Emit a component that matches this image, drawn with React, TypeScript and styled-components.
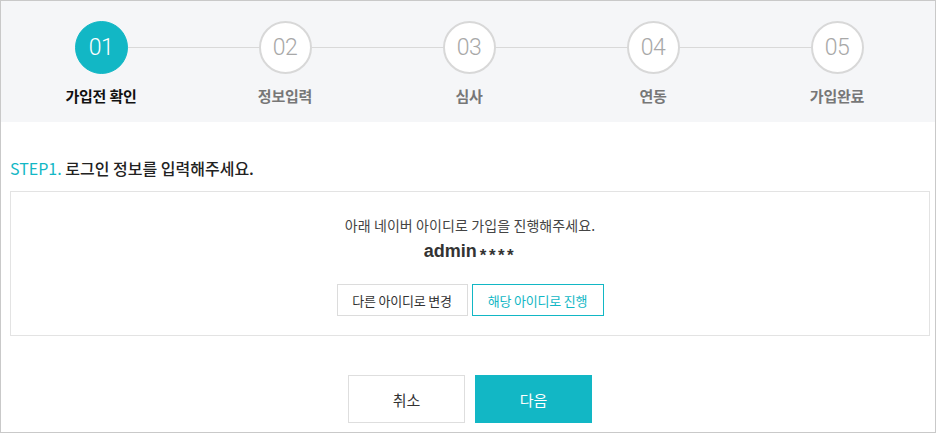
import styled, { createGlobalStyle } from "styled-components";

const Teal = "#12b7c5";

const steps = [
  { no: "01", label: "가입전 확인" },
  { no: "02", label: "정보입력" },
  { no: "03", label: "심사" },
  { no: "04", label: "연동" },
  { no: "05", label: "가입완료" },
];

const App: React.FC = () => {
  const current = 0;
  return (
    <>
      <GlobalStyle />
      <Frame>
        <StepsBand>
          {steps.map((step, i) => (
            <Step key={step.no} first={i === 0}>
              <Circle active={i === current}>{step.no}</Circle>
              <StepLabel active={i === current}>{step.label}</StepLabel>
            </Step>
          ))}
        </StepsBand>
        <Content>
          <Title>
            <span className="step">STEP1.</span> 로그인 정보를 입력해주세요.
          </Title>
          <InfoBox>
            <Message>아래 네이버 아이디로 가입을 진행해주세요.</Message>
            <UserId>
              admin<span className="mask">****</span>
            </UserId>
            <ChoiceRow>
              <ChoiceButton>다른 아이디로 변경</ChoiceButton>
              <ChoiceButton primary>해당 아이디로 진행</ChoiceButton>
            </ChoiceRow>
          </InfoBox>
          <ActionRow>
            <ActionButton>취소</ActionButton>
            <ActionButton primary>다음</ActionButton>
          </ActionRow>
        </Content>
      </Frame>
    </>
  );
};

export default App;

const GlobalStyle = createGlobalStyle`
  body {
    margin: 0;
    background: #fff;
    font-family: "Noto Sans CJK KR", "Noto Sans", sans-serif;
  }
  * {
    box-sizing: border-box;
  }
`;

const Frame = styled("div")`
  width: 936px;
  height: 433px;
  border: 1px solid #c9c9c9;
  overflow: hidden;
`;

const StepsBand = styled("div")`
  display: grid;
  grid-template-columns: repeat(5, 184px);
  height: 121px;
  padding: 0 6px 0 8px;
  background: #f5f6f8;
`;

const Step = styled("div")<{ first?: boolean }>`
  position: relative;
  display: flex;
  flex-direction: column;
  align-items: center;
  padding-top: 20px;
  &::before {
    content: "";
    display: ${(p) => (p.first ? "none" : "block")};
    position: absolute;
    top: 46px;
    left: -92px;
    width: 184px;
    height: 1px;
    background: #d9d9d9;
  }
`;

const Circle = styled("div")<{ active?: boolean }>`
  position: relative;
  z-index: 1;
  display: flex;
  align-items: center;
  justify-content: center;
  width: 53px;
  height: 53px;
  border-radius: 50%;
  border: ${(p) => (p.active ? `1px solid ${Teal}` : "2px solid #d8d8d8")};
  background: ${(p) => (p.active ? Teal : "#fff")};
  color: ${(p) => (p.active ? "#fff" : "#a8a8a8")};
  font-family: Roboto, "Liberation Sans", sans-serif;
  font-weight: 300;
  font-size: 23px;
  letter-spacing: -0.5px;
`;

const StepLabel = styled("div")<{ active?: boolean }>`
  margin-top: 12px;
  font-size: 15px;
  line-height: 20px;
  font-weight: 700;
  color: ${(p) => (p.active ? "#111" : "#777")};
  letter-spacing: -0.2px;
`;

const Content = styled("div")`
  padding: 0 5px 0 9px;
`;

const Title = styled("div")`
  padding-top: 34px;
  font-size: 16px;
  line-height: 24px;
  font-weight: 500;
  color: #222;
  .step {
    color: ${Teal};
    font-weight: 400;
  }
`;

const InfoBox = styled("div")`
  margin-top: 11px;
  height: 145px;
  padding-top: 23px;
  border: 1px solid #e3e3e3;
  display: flex;
  flex-direction: column;
  align-items: center;
`;

const Message = styled("div")`
  font-size: 14px;
  line-height: 20px;
  color: #444;
  letter-spacing: 0.1px;
`;

const UserId = styled("div")`
  margin-top: 4px;
  font-family: "Liberation Sans", Arial, sans-serif;
  font-size: 18px;
  line-height: 24px;
  font-weight: 700;
  color: #333;
  .mask {
    display: inline-block;
    margin-left: 3px;
    font-size: 17px;
    letter-spacing: 2.5px;
    vertical-align: -4px;
  }
`;

const ChoiceRow = styled("div")`
  display: flex;
  gap: 4px;
  margin-top: 16px;
`;

const ChoiceButton = styled("button")<{ primary?: boolean }>`
  width: ${(p) => (p.primary ? "132px" : "131px")};
  height: 32px;
  padding: 0;
  background: #fff;
  border: 1px solid ${(p) => (p.primary ? Teal : "#dcdcdc")};
  color: ${(p) => (p.primary ? Teal : "#333")};
  font-family: inherit;
  font-size: 13px;
  letter-spacing: -0.2px;
`;

const ActionRow = styled("div")`
  display: flex;
  justify-content: center;
  gap: 10px;
  margin-top: 39px;
`;

const ActionButton = styled("button")<{ primary?: boolean }>`
  width: 117px;
  height: 48px;
  padding: 0;
  border: 1px solid ${(p) => (p.primary ? Teal : "#dedede")};
  background: ${(p) => (p.primary ? Teal : "#fff")};
  color: ${(p) => (p.primary ? "#fff" : "#333")};
  font-family: inherit;
  font-size: 15px;
`;
